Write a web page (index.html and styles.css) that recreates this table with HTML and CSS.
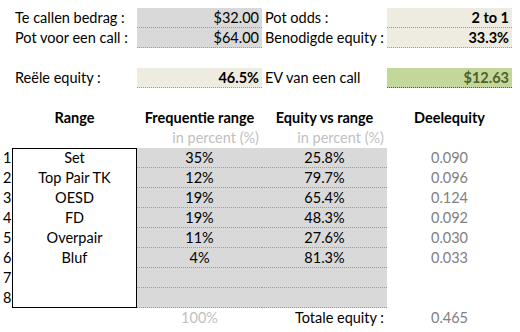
FILE: index.html
```html
<!DOCTYPE html>
<html lang="nl">
<head>
<meta charset="utf-8">
<title>Equity calculator</title>
<link rel="stylesheet" href="styles.css">
</head>
<body>
<div class="sheet">
  <div class="num"></div><div class="label">Te callen bedrag :</div><div class="val grey">$32.00</div>
  <div class="label">Pot odds :</div><div class="val beige bold">2 to 1</div>

  <div class="num"></div><div class="label">Pot voor een call :</div><div class="val grey">$64.00</div>
  <div class="label">Benodigde equity :</div><div class="val beige bold">33.3%</div>

  <div class="blank"></div>

  <div class="num"></div><div class="label">Reële equity :</div><div class="val beige bold">46.5%</div>
  <div class="label">EV van een call</div><div class="val green bold">$12.63</div>

  <div class="blank"></div>

  <div class="num"></div><div class="head">Range</div><div class="head">Frequentie range</div>
  <div class="head">Equity vs range</div><div class="head">Deelequity</div>

  <div class="num"></div><div class="cell"></div><div class="hint">in percent (%)</div>
  <div class="hint">in percent (%)</div><div class="cell"></div>

  <div class="num">1</div><div class="range top">Set</div><div class="data">35%</div><div class="data">25.8%</div><div class="part">0.090</div>
  <div class="num">2</div><div class="range">Top Pair TK</div><div class="data">12%</div><div class="data">79.7%</div><div class="part">0.096</div>
  <div class="num">3</div><div class="range">OESD</div><div class="data">19%</div><div class="data">65.4%</div><div class="part">0.124</div>
  <div class="num">4</div><div class="range">FD</div><div class="data">19%</div><div class="data">48.3%</div><div class="part">0.092</div>
  <div class="num">5</div><div class="range">Overpair</div><div class="data">11%</div><div class="data">27.6%</div><div class="part">0.030</div>
  <div class="num">6</div><div class="range">Bluf</div><div class="data">4%</div><div class="data">81.3%</div><div class="part">0.033</div>
  <div class="num">7</div><div class="range"></div><div class="data"></div><div class="data"></div><div class="part"></div>
  <div class="num">8</div><div class="range bottom"></div><div class="data"></div><div class="data"></div><div class="part"></div>

  <div class="num"></div><div class="cell"></div><div class="total-pct">100%</div>
  <div class="total-label">Totale equity :</div><div class="part">0.465</div>
</div>
</body>
</html>
```

FILE: styles.css
```css
html, body {
  margin: 0;
  padding: 0;
  background: #ffffff;
}
body {
  padding-top: 8px;
  font-family: Lato, "Open Sans", sans-serif;
  font-size: 14.5px;
  color: #000000;
}
.sheet {
  display: grid;
  grid-template-columns: 12px 125px 125px 125px 125px;
  grid-auto-rows: 20px;
}
.sheet > div {
  box-sizing: border-box;
  line-height: 20px;
  white-space: nowrap;
  overflow: visible;
}
.blank {
  grid-column: 1 / -1;
}
.num {
  padding-left: 3px;
}
.label {
  padding-left: 3px;
}
.val {
  text-align: right;
  padding-right: 3px;
  border-bottom: 1px dotted #9a9a9a;
  line-height: 19px !important;
}
.grey { background: #d9d9d9; }
.beige { background: #eeece1; }
.green {
  background: #c4d79b;
  color: #4f6228;
  border-bottom-color: #2f7a1f !important;
}
.bold { font-weight: 700; }
.head {
  text-align: center;
  font-weight: 700;
}
.hint {
  text-align: right;
  color: #bfbfbf;
  padding-right: 3px;
}
.range {
  text-align: center;
  border-left: 1px solid #000000;
  border-right: 1px solid #000000;
}
.range.top { border-top: 1px solid #000000; line-height: 18px !important; }
.range.bottom { border-bottom: 1px solid #000000; }
.data {
  background: #d9d9d9;
  text-align: center;
  border-bottom: 1px dotted #9a9a9a;
  line-height: 19px !important;
}
.part {
  text-align: center;
  color: #808080;
}
.total-pct {
  text-align: center;
  color: #bfbfbf;
}
.total-label {
  text-align: right;
  padding-right: 3px;
}
```
